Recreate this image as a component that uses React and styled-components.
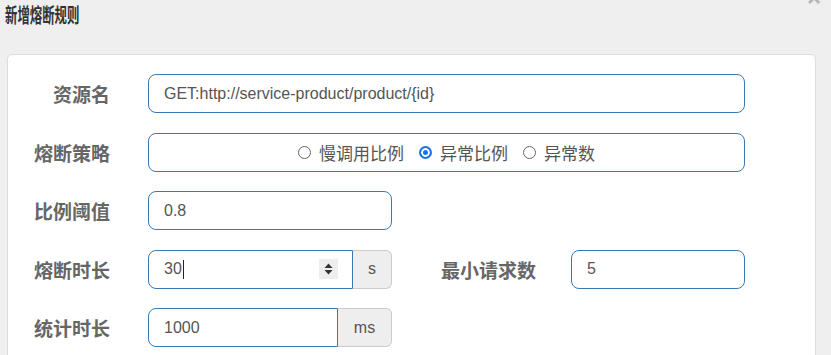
import styled, { createGlobalStyle } from "styled-components";

const GlobalStyle = createGlobalStyle`
  html, body {
    margin: 0;
    padding: 0;
    background: #efefef;
    overflow: hidden;
  }
`;

const cjk = `"Noto Sans CJK SC", "Noto Sans", sans-serif`;
const latin = `"Liberation Sans", Arial, "Noto Sans CJK SC", sans-serif`;

const Header = styled.div`
  display: flex;
  justify-content: space-between;
  align-items: flex-start;
  height: 54px;
  padding: 0 0 0 5px;
  box-sizing: border-box;
`;

const Title = styled.h4`
  margin: 2px 0 0;
  font-family: ${cjk};
  font-weight: 700;
  font-size: 20px;
  line-height: 26px;
  color: #333;
  transform: scaleX(0.62);
  transform-origin: left center;
  white-space: nowrap;
`;

const Close = styled.span`
  margin: -13px 10px 0 0;
  font-family: ${latin};
  font-weight: 700;
  font-size: 24px;
  line-height: 22px;
  color: #b4b4b4;
`;

const Card = styled.div`
  margin: 0 15px 0 7px;
  height: 310px;
  background: #fff;
  border: 1px solid #dcdcdc;
  border-radius: 5px;
  padding: 19px 0 0;
  box-sizing: border-box;
  overflow: hidden;
`;

const Row = styled.div`
  display: flex;
  align-items: center;
  height: 39px;
  margin-bottom: 19.5px;
`;

const Label = styled.label`
  width: ${(p) => p.$w}px;
  margin-right: ${(p) => p.$gap}px;
  text-align: right;
  font-family: ${cjk};
  font-weight: 700;
  font-size: 19px;
  color: #666;
  white-space: nowrap;
`;

const Control = styled.div`
  display: flex;
  align-items: center;
  width: ${(p) => p.$w}px;
  height: 39px;
  box-sizing: border-box;
  border: 1px solid #3a78b5;
  border-radius: ${(p) => (p.$addon ? "8px 0 0 8px" : "8px")};
  padding: 0 15px;
  font-family: ${latin};
  font-size: 16px;
  color: #555;
  justify-content: ${(p) => (p.$center ? "center" : "flex-start")};
`;

const Group = styled.div`
  display: flex;
  align-items: center;
`;

const Addon = styled.div`
  display: flex;
  align-items: center;
  justify-content: center;
  width: ${(p) => p.$w}px;
  height: 39px;
  box-sizing: border-box;
  background: #eee;
  border: 1px solid #ccc;
  border-left: none;
  border-radius: 0 6px 6px 0;
  font-family: ${latin};
  font-size: 16px;
  color: #555;
`;

const Caret = styled.span`
  display: inline-block;
  width: 1px;
  height: 19px;
  background: #222;
  margin-left: 1px;
`;

const Spinner = styled.span`
  margin-left: auto;
  margin-right: -1px;
  width: 19px;
  height: 20px;
  background: #eee;
  display: flex;
  align-items: center;
  justify-content: center;
`;

const Radio = styled.span`
  display: inline-flex;
  align-items: center;
  margin-right: 15px;
  font-family: ${cjk};
  font-size: 17px;
  color: #555;
  &:last-child {
    margin-right: 0;
  }
`;

const Dot = styled.span`
  width: 13px;
  height: 13px;
  box-sizing: border-box;
  border-radius: 50%;
  margin-right: 8px;
  border: ${(p) => (p.$on ? "2px solid #1a73e8" : "1px solid #666")};
  background: ${(p) => (p.$on ? "#1a73e8" : "#fff")};
  box-shadow: ${(p) => (p.$on ? "inset 0 0 0 2px #fff" : "none")};
`;

export default function App() {
  return (
    <>
      <GlobalStyle />
      <Header>
        <Title>新增熔断规则</Title>
        <Close>×</Close>
      </Header>
      <Card>
        <Row>
          <Label $w={102} $gap={38}>资源名</Label>
          <Control $w={597}>GET:http://service-product/product/{"{id}"}</Control>
        </Row>
        <Row>
          <Label $w={102} $gap={38}>熔断策略</Label>
          <Control $w={597} $center>
            <Radio><Dot />慢调用比例</Radio>
            <Radio><Dot $on />异常比例</Radio>
            <Radio><Dot />异常数</Radio>
          </Control>
        </Row>
        <Row>
          <Label $w={102} $gap={38}>比例阈值</Label>
          <Control $w={244}>0.8</Control>
        </Row>
        <Row>
          <Label $w={102} $gap={38}>熔断时长</Label>
          <Group>
            <Control $w={205} $addon>
              30<Caret />
              <Spinner>
                <svg width="9" height="12" viewBox="0 0 9 12">
                  <path d="M4.5 0.5 L8.5 5 L0.5 5 Z M0.5 7 L8.5 7 L4.5 11.5 Z" fill="#333" />
                </svg>
              </Spinner>
            </Control>
            <Addon $w={39}>s</Addon>
          </Group>
          <Label $w={144} $gap={35}>最小请求数</Label>
          <Control $w={174}>5</Control>
        </Row>
        <Row>
          <Label $w={102} $gap={38}>统计时长</Label>
          <Group>
            <Control $w={190} $addon>1000</Control>
            <Addon $w={54}>ms</Addon>
          </Group>
        </Row>
      </Card>
    </>
  );
}
